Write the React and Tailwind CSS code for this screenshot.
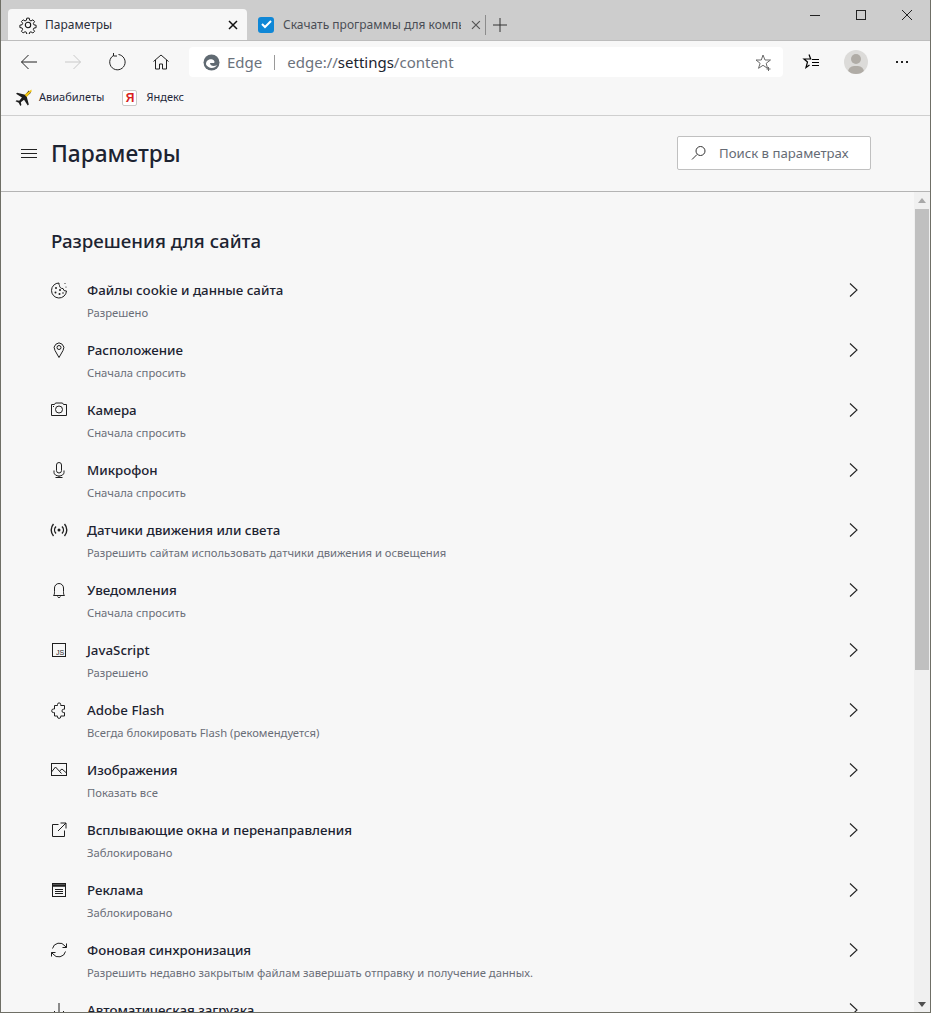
const FONT = 'font-["Noto_Sans","Open_Sans",sans-serif]';

const S = { fill: 'none', stroke: 'currentColor', strokeWidth: 1 };

function Ico({ children, size = 20, box = 20, className = '' }) {
  return (
    <svg width={size} height={size} viewBox={`0 0 ${box} ${box}`} className={className} {...S}>
      {children}
    </svg>
  );
}

const ROWS = [
  {
    title: 'Файлы cookie и данные сайта',
    sub: 'Разрешено',
    icon: (
      <Ico>
        <path d="M10 3a7.500 7.500 0 1 0 7.500 8 3 3 0 0 1-3.500-2.500A3 3 0 0 1 10.500 5.500 3 3 0 0 1 10 3z" />
        <circle cx="7" cy="8" r="1" fill="currentColor" stroke="none" />
        <circle cx="6.500" cy="12.500" r="1" fill="currentColor" stroke="none" />
        <circle cx="10.500" cy="14" r="1" fill="currentColor" stroke="none" />
        <circle cx="11" cy="10" r="1" fill="currentColor" stroke="none" />
        <circle cx="14" cy="13" r="0.800" fill="currentColor" stroke="none" />
        <circle cx="16" cy="3.500" r="0.600" fill="currentColor" stroke="none" />
        <circle cx="17" cy="7" r="0.600" fill="currentColor" stroke="none" />
      </Ico>
    ),
  },
  {
    title: 'Расположение',
    sub: 'Сначала спросить',
    icon: (
      <Ico>
        <path d="M10 17.500 6 10.500a4.800 4.800 0 1 1 8 0z" />
        <circle cx="10" cy="7.500" r="2" />
      </Ico>
    ),
  },
  {
    title: 'Камера',
    sub: 'Сначала спросить',
    icon: (
      <Ico>
        <path d="M2.500 4.500h3l1-1.500h7l1 1.500h3v11h-15z" />
        <circle cx="10" cy="9.500" r="3.500" />
        <path d="M4 6.500h1" />
      </Ico>
    ),
  },
  {
    title: 'Микрофон',
    sub: 'Сначала спросить',
    icon: (
      <Ico>
        <rect x="7.500" y="2.500" width="5" height="10.500" rx="2.500" />
        <path d="M5 10.500v2a5 3.500 0 0 0 10 0v-2M10 16v1.500M6.500 17.500h7" />
      </Ico>
    ),
  },
  {
    title: 'Датчики движения или света',
    sub: 'Разрешить сайтам использовать датчики движения и освещения',
    icon: (
      <Ico>
        <circle cx="10" cy="10" r="1.500" fill="currentColor" stroke="none" />
        <g strokeWidth="1.400">
          <path d="M7 6.500a5 5 0 0 0 0 7M13 6.500a5 5 0 0 1 0 7" />
          <path d="M4.500 4a9 9 0 0 0 0 12M15.500 4a9 9 0 0 1 0 12" />
        </g>
      </Ico>
    ),
  },
  {
    title: 'Уведомления',
    sub: 'Сначала спросить',
    icon: (
      <Ico>
        <path d="M4.500 15.500c1-1 1-2 1-4V8a4.500 4.500 0 0 1 9 0v3.500c0 2 0 3 1 4z" />
        <path d="M8.500 16.500a1.600 1.600 0 0 0 3 0" />
      </Ico>
    ),
  },
  {
    title: 'JavaScript',
    sub: 'Разрешено',
    icon: (
      <Ico>
        <rect x="3.500" y="3.500" width="13" height="13" />
        <text x="7" y="14.800" fontSize="7" fill="#1f1f1f" stroke="none" fontFamily="Liberation Sans">
          JS
        </text>
      </Ico>
    ),
  },
  {
    title: 'Adobe Flash',
    sub: 'Всегда блокировать Flash (рекомендуется)',
    icon: (
      <Ico>
        <path d="M8.500 5.500V4.500a1.600 1.600 0 0 1 3.200 0v1h3.800v3.700h-.8a1.700 1.700 0 0 0 0 3.400h.8v3.400h-3.800v.8a1.600 1.600 0 0 1-3.200 0v-.8H5.500v-3.400h-1a1.800 1.800 0 0 1 0-3.600h1V5.500z" />
      </Ico>
    ),
  },
  {
    title: 'Изображения',
    sub: 'Показать все',
    icon: (
      <Ico>
        <rect x="2.500" y="3.500" width="15" height="12" />
        <path d="m2.500 12 4-5 6 6.500M10.500 11l2.500-2 4.500 4" />
      </Ico>
    ),
  },
  {
    title: 'Всплывающие окна и перенаправления',
    sub: 'Заблокировано',
    icon: (
      <Ico>
        <path d="M9.500 4.500h-6v12h12v-6" />
        <path d="M9 11 17 3M11.500 3H17v5.500" />
      </Ico>
    ),
  },
  {
    title: 'Реклама',
    sub: 'Заблокировано',
    icon: (
      <Ico>
        <rect x="3.500" y="3.500" width="13" height="13" />
        <path d="M3.500 5.500h13" strokeWidth="2.500" />
        <path d="M6 9.500h8M6 11.500h8M6 13.500h8" />
      </Ico>
    ),
  },
  {
    title: 'Фоновая синхронизация',
    sub: 'Разрешить недавно закрытым файлам завершать отправку и получение данных.',
    icon: (
      <Ico>
        <path d="M3.500 8.500a7 7 0 0 1 12.500-2.500l1.500 1.500M17.500 3.500v4h-4" />
        <path d="M16.500 11.500A7 7 0 0 1 4 14l-1.500-1.500M2.500 16.500v-4h4" />
      </Ico>
    ),
  },
  {
    title: 'Автоматическая загрузка',
    sub: 'Разрешено',
    icon: (
      <Ico>
        <path d="M10 3v13M5 11l5 5 5-5" />
      </Ico>
    ),
  },
];

function Row({ title, sub, icon }) {
  return (
    <div className="flex h-[60px] shrink-0 items-start pl-[48px] pr-[56px]">
      <div className="flex h-[20px] w-[20px] shrink-0 items-center justify-center text-[#1f1f1f]">{icon}</div>
      <div className="ml-[18px] flex-1">
        <div className="h-[20px] text-[13.3px] leading-[20px] font-medium text-[#1c2331]">{title}</div>
        <div className="mt-[5px] text-[11.25px] leading-[16px] text-[#6a6e78]">{sub}</div>
      </div>
      <svg width="9" height="14" viewBox="0 0 9 14" fill="none" stroke="#222" strokeWidth="1.100" className="mt-[3px]">
        <path d="m1 .5 7 6.500-7 6.500" />
      </svg>
    </div>
  );
}

function TabBar() {
  return (
    <div className="flex h-[41px] shrink-0 items-end border-b border-[#bdbdbd] bg-[#cdcdcd] pl-[7px]">
      <div className="flex h-[31px] w-[239px] items-center rounded-t-[4px] bg-[#f7f7f7] pl-[11px] pr-[9px]">
        <svg width="18" height="18" viewBox="0 0 20 20" {...S} strokeWidth="1.200" className="text-[#111]">
          <circle cx="10" cy="10" r="3" />
          <path d="M8.500 1.500h3l.5 2.700 1.700.8 2.400-1.400 2 2.200-1.500 2.200.7 1.800 2.700.5v3l-2.700.5-.7 1.700 1.500 2.300-2.100 2.100-2.300-1.500-1.700.7-.5 2.500h-3l-.5-2.600-1.700-.7-2.300 1.500-2.100-2.100 1.500-2.300-.7-1.700-2.700-.5v-3l2.700-.5.7-1.800-1.500-2.200 2.100-2.100 2.300 1.400 1.700-.8z" transform="translate(1 1) scale(0.9)" />
        </svg>
        <span className="ml-[8px] flex-1 text-[12px] text-[#2b2f3a]">Параметры</span>
        <svg width="10" height="10" viewBox="0 0 10 10" stroke="#111" strokeWidth="1.500">
          <path d="m1 1 8 8M9 1 1 9" />
        </svg>
      </div>
      <div className="flex h-[31px] w-[238px] items-center pl-[11px] pr-[4px]">
        <div className="flex h-[16px] w-[16px] shrink-0 items-center justify-center rounded-[3px] bg-[#0f87d6]">
          <svg width="11" height="9" viewBox="0 0 11 9" fill="none" stroke="#fff" strokeWidth="2">
            <path d="m1 4 3 3 6-6" />
          </svg>
        </div>
        <span className="ml-[9px] w-[181px] overflow-hidden text-[12px] whitespace-nowrap text-[#4a4d55]">
          Скачать программы для компьютера
        </span>
        <svg width="10" height="10" viewBox="0 0 10 10" stroke="#555" strokeWidth="1.200" className="ml-[10px]">
          <path d="m1 1 8 8M9 1 1 9" />
        </svg>
      </div>
      <div className="mb-[5px] h-[20px] w-px bg-[#8c8c8c]" />
      <svg width="14" height="14" viewBox="0 0 14 14" stroke="#333" className="mb-[8px] ml-[7px]">
        <path d="M7 0v14M0 7h14" />
      </svg>
      <div className="mb-[19px] ml-auto flex items-center text-[#222]">
        <svg width="46" height="12" viewBox="0 0 46 12" stroke="#222">
          <path d="M18 6.500h10" />
        </svg>
        <svg width="46" height="12" viewBox="0 0 46 12" fill="none" stroke="#222">
          <rect x="18.500" y="1.500" width="9" height="9" />
        </svg>
        <svg width="46" height="12" viewBox="0 0 46 12" stroke="#222">
          <path d="m18 1 10 10M28 1 18 11" />
        </svg>
      </div>
    </div>
  );
}

function Toolbar() {
  return (
    <div className="flex h-[41px] shrink-0 items-center bg-[#f7f7f7] pl-[19px] pr-[19px] pt-[1px]">
      <svg width="18" height="18" viewBox="0 0 18 18" fill="none" stroke="#222">
        <path d="M17 9H1.500M8.500 2 1.500 9l7 7" />
      </svg>
      <svg width="18" height="18" viewBox="0 0 18 18" fill="none" stroke="#c9c9c9" className="ml-[26px]">
        <path d="M1 9h15.500M9.500 2l7 7-7 7" />
      </svg>
      <svg width="18" height="18" viewBox="0 0 18 18" fill="none" stroke="#222" className="ml-[26px]">
        <path d="M5.500 2.500A7.700 7.700 0 1 0 10.500 1.500M5.500 0v3h3.500" />
      </svg>
      <svg width="18" height="18" viewBox="0 0 18 18" fill="none" stroke="#222" className="ml-[26px]">
        <path d="M1.500 8.500 9 2l7.500 6.500M3.500 7v9h4v-5h3v5h4V7" />
      </svg>
      <div className="ml-[19px] flex h-[30px] w-[594px] items-center rounded-[4px] bg-white pl-[14px] pr-[11px]">
        <svg width="17" height="17" viewBox="0 0 17 17">
          <circle cx="8.500" cy="8.500" r="8" fill="#606a72" />
          <path d="M3 10c0-4 4-5.500 6.500-4.500 2 .8 2.500 2.500 1.500 3.500H7c0 3 4 4 7 2-1.500 3-6 4-8.500 2C4 12 3 11 3 10z" fill="#fff" />
        </svg>
        <span className="ml-[7px] text-[15px] text-[#6b727c]">Edge</span>
        <div className="mx-[12px] h-[15px] w-px bg-[#9a9a9a]" />
        <span className="text-[15px] text-[#6b727c]">
          edge://<span className="text-[#20242e]">settings</span>/content
        </span>
        <svg width="17" height="17" viewBox="0 0 17 17" fill="none" stroke="#6a6a6a" className="ml-auto">
          <path d="m8 1 2 5h5.500l-4.300 3.300 1.300 5-4.500-3-4.500 3 1.600-5L1 6h5.300zM13.500 13v4M11.500 15h4" />
        </svg>
      </div>
      <svg width="18" height="18" viewBox="0 0 18 18" fill="none" stroke="#000" strokeWidth="1.200" className="ml-[19px]">
        <path d="M7 1.500 8.700 6H2l3.500 3-1.500 5.500 3.500-2.500M10 6.500h7M10 9.500h7M10 12.500h7" />
      </svg>
      <div className="relative ml-[24px] h-[24px] w-[24px] overflow-hidden rounded-full bg-[#dcdbd9]">
        <div className="absolute left-[7px] top-[4px] h-[10px] w-[10px] rounded-full bg-[#b0aca6]" />
        <div className="absolute left-[4px] top-[16px] h-[12px] w-[16px] rounded-full bg-[#b0aca6]" />
      </div>
      <div className="ml-[28px] flex gap-[3px]">
        <div className="h-[2px] w-[2px] bg-[#222]" />
        <div className="h-[2px] w-[2px] bg-[#222]" />
        <div className="h-[2px] w-[2px] bg-[#222]" />
      </div>
    </div>
  );
}

function Bookmarks() {
  return (
    <div className="flex h-[34px] shrink-0 items-center border-b border-[#cfcfcf] bg-[#f7f7f7] pb-[2px] pl-[14px]">
      <svg width="17" height="17" viewBox="0 0 16 16">
        <path d="M13 1.500 9.500 5.500 2 3.500 1 4.500 6.500 8 4 11 1.500 10.500.5 11.500 3.500 13l1.500 3 1-1L5.500 12.500l3-2.500 3.500 5.500 1-1L11 7l4-3.500z" fill="#1d1d1d" />
        <path d="M15.500.5 9 5.500l2 2 4.500-5.500z" fill="#f3c613" />
      </svg>
      <span className="ml-[7px] text-[11px] text-[#23283a]">Авиабилеты</span>
      <div className="ml-[18px] flex h-[16px] w-[15px] items-center justify-center rounded-[2px] border border-[#c8c8c8] bg-white font-['Liberation_Sans',sans-serif] text-[12px] leading-none font-bold text-[#d8201c]">
        Я
      </div>
      <span className="ml-[9px] text-[11px] text-[#23283a]">Яндекс</span>
    </div>
  );
}

function PageHeader() {
  return (
    <div className="flex h-[76px] shrink-0 items-center border-b border-[#b4b4b4] bg-[#f7f7f7] pl-[20px]">
      <div className="flex w-[16px] flex-col gap-[3px]">
        <div className="h-px bg-[#222]" />
        <div className="h-px bg-[#222]" />
        <div className="h-px bg-[#222]" />
      </div>
      <h1 className="ml-[14px] mt-[2px] text-[22.7px] leading-none font-medium text-[#1c2331]">Параметры</h1>
      <div className="ml-auto mb-[2px] mr-[59px] flex h-[34px] w-[194px] items-center rounded-[2px] border border-[#c0c0c0] bg-white pl-[13px]">
        <svg width="16" height="16" viewBox="0 0 16 16" fill="none" stroke="#333">
          <circle cx="9.500" cy="6" r="4.500" />
          <path d="m6 9.500-5 5" />
        </svg>
        <span className="ml-[12px] pt-[2px] text-[13.2px] text-[#666b75]">Поиск в параметрах</span>
      </div>
    </div>
  );
}

function Scrollbar() {
  return (
    <div className="flex w-[16px] shrink-0 flex-col items-center bg-[#f0f0f0]">
      <svg width="8" height="5" viewBox="0 0 8 5" className="mt-[6px] shrink-0">
        <path d="M4 0 8 5H0z" fill="#a8a8a8" />
      </svg>
      <div className="mt-[6px] h-[461px] w-[14px] shrink-0 bg-[#c0c0c0]" />
      <svg width="8" height="5" viewBox="0 0 8 5" className="mt-auto mb-[5px] shrink-0">
        <path d="M0 0h8L4 5z" fill="#505050" />
      </svg>
    </div>
  );
}

export default function App() {
  return (
    <div className={`${FONT} flex h-[1013px] w-[931px] flex-col overflow-hidden border-x border-b border-x-[#6f6f66] border-b-[#6f6f66] bg-[#f7f7f7]`}>
      <TabBar />
      <Toolbar />
      <Bookmarks />
      <PageHeader />
      <div className="flex min-h-0 flex-1">
        <div className="flex min-w-0 flex-1 flex-col overflow-hidden">
          <h2 className="mb-[25px] mt-[35px] shrink-0 pl-[50px] text-[18.7px] leading-[28px] font-medium text-[#1c2331]">
            Разрешения для сайта
          </h2>
          {ROWS.map(r => (
            <Row key={r.title} {...r} />
          ))}
        </div>
        <Scrollbar />
      </div>
    </div>
  );
}
